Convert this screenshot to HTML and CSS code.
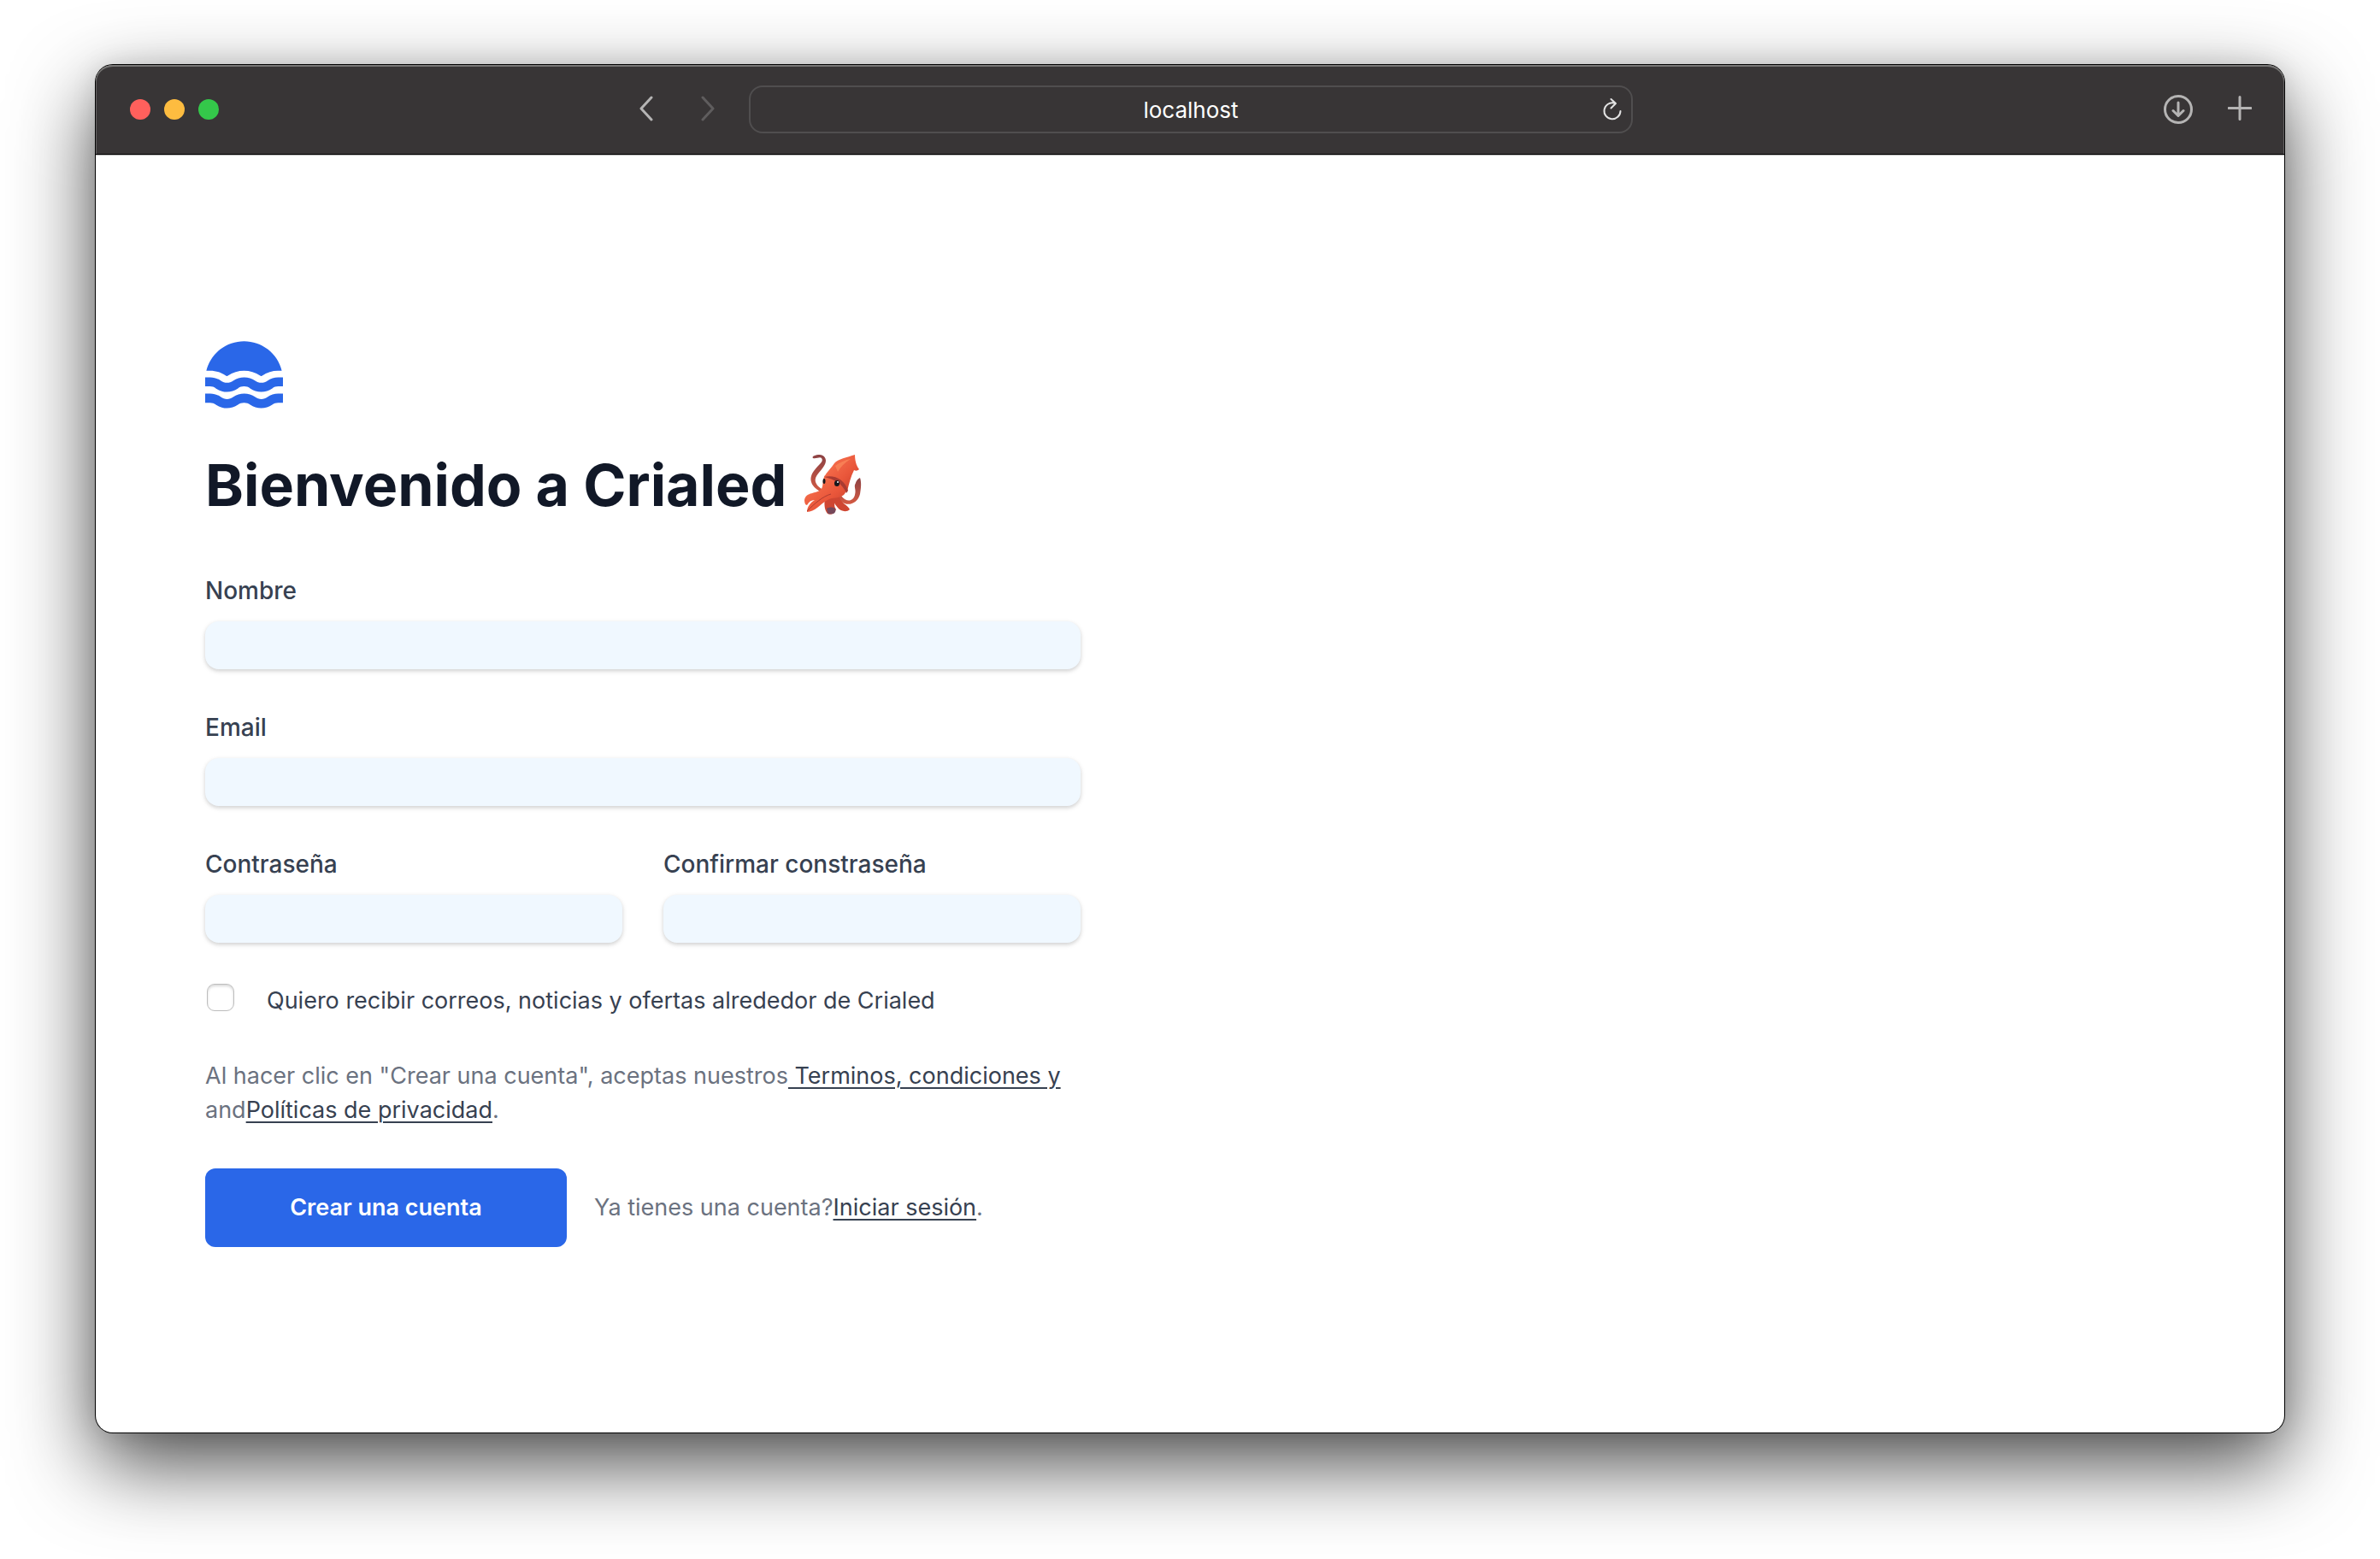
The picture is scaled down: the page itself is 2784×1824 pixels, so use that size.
FILE: index.html
```
<!DOCTYPE html>
<html lang="es">
<head>
<meta charset="utf-8">
<meta name="viewport" content="width=device-width, initial-scale=1">
<title>Crialed</title>
<link rel="stylesheet" href="styles.css">
</head>
<body>
<div class="window">
  <header class="toolbar">
    <div class="toolbar-left">
      <div class="lights">
        <span class="light light-red"></span>
        <span class="light light-yellow"></span>
        <span class="light light-green"></span>
      </div>
      <nav class="history">
        <button type="button" class="icon-button" aria-label="Atrás">
          <svg width="20" height="32" viewBox="0 0 20 32"><path d="M16 2 4 15l12 13" stroke="#b5b4b4"/></svg>
        </button>
        <button type="button" class="icon-button" aria-label="Adelante">
          <svg width="20" height="32" viewBox="0 0 20 32"><path d="M4 2l12 13L4 28" stroke="#5f5d5e"/></svg>
        </button>
      </nav>
    </div>
    <div class="address">
      <input class="address-input" type="text" value="localhost" aria-label="Dirección">
      <button type="button" class="icon-button" aria-label="Recargar">
        <svg width="24" height="28" viewBox="0 0 24 28"><path class="thin" d="M14 6.500A9.500 9.500 0 1 0 21.500 16M10.500 2l5.500 5-5.500 5.500" stroke="#e2e2e2"/></svg>
      </button>
    </div>
    <div class="toolbar-right">
      <button type="button" class="icon-button" aria-label="Descargas">
        <svg width="36" height="36" viewBox="0 0 36 36"><path d="M18 10v15M12 19.500l6 6 6-6" stroke="#b5b4b4"/><circle cx="18" cy="18" r="15.500" stroke="#b5b4b4"/></svg>
      </button>
      <button type="button" class="icon-button" aria-label="Nueva pestaña">
        <svg width="28" height="32" viewBox="0 0 28 32"><path d="M14 1.500v26M1 14.500h26" stroke="#b5b4b4"/></svg>
      </button>
    </div>
  </header>
  <main class="page">
    <section class="signup">
      <a class="logo" href="#" aria-label="Inicio">
        <svg width="93" height="80" viewBox="0 0 28 24" fill="#2a67e8">
          <path d="M.41 10.385C1.148 7.419 2.856 4.786 5.264 2.904 7.671 1.022 10.639 0 13.695 0s6.024 1.022 8.431 2.904c2.408 1.882 4.116 4.515 4.854 7.481h-1.200c-2.024-.030-4.007.575-5.670 1.730-.096.069-.196.133-.300.190h-.140c-.104-.057-.204-.121-.300-.190-1.678-1.128-3.653-1.731-5.675-1.731s-3.997.603-5.675 1.731c-.096.069-.196.133-.300.190h-.140c-.104-.057-.204-.121-.300-.190-1.663-1.155-3.646-1.760-5.670-1.730z"/>
          <path id="wave" d="M23.620 16.655c.616-.480 1.380-.731 2.160-.710h1.610v-3.210h-1.610c-1.375-.017-2.718.411-3.830 1.220-.626.461-1.383.710-2.160.710s-1.534-.249-2.160-.710c-1.140-.794-2.496-1.219-3.885-1.219s-2.745.425-3.885 1.219c-.626.461-1.383.710-2.160.710s-1.534-.249-2.160-.710c-1.126-.819-2.488-1.248-3.880-1.220H0v3.210h1.610c.781-.021 1.544.230 2.160.710 1.138.794 2.492 1.220 3.880 1.220s2.742-.426 3.880-1.220c.617-.479 1.380-.729 2.160-.710.781-.022 1.545.229 2.160.710 1.140.793 2.496 1.219 3.885 1.219s2.745-.426 3.885-1.219z"/>
          <use href="#wave" y="5.740"/>
        </svg>
      </a>
      <h1 class="title">Bienvenido a Crialed
        <svg class="squid" viewBox="0 0 90 90" role="img" aria-label="Calamar">
          <defs>
            <linearGradient id="skin" x1="0" y1="0" x2="1" y2="1"><stop offset="0" stop-color="#fb7a55"/><stop offset=".6" stop-color="#e9563a"/><stop offset="1" stop-color="#c23d2c"/></linearGradient>
            <linearGradient id="arm" x1="0" y1="0" x2="0" y2="1"><stop offset="0" stop-color="#8c4244"/><stop offset="1" stop-color="#d55a43"/></linearGradient>
          </defs>
          <path d="M38 56C22 50 16 40 24 29c6-8 12-11 9-15-2-2-6 1-10 0-2-2 3-4 8-4 7 1 9 7 5 13-4 7-12 12-10 19 2 6 8 9 15 11z" fill="url(#arm)"/>
          <path d="M56 58c6 8 14 7 16-1 2-7-2-9 1-14 1-4 5-6 5-6 2 6 1 13 0 19-2 9-11 14-18 11-5-2-8-6-9-9z" fill="url(#arm)"/>
          <path d="M54 58c0 8 10 11 12 16-4 4-11 2-14-2-4-4-6-9-6-14z" fill="#cf4632"/>
          <path d="M37 60c-1 7-1 14 3 19 4 2 8 0 10-5-4-5 0-10 0-17z" fill="#cf4632"/>
          <path d="M39 73c3-2 7-2 10 0 1 3 0 5-2 6-3 0-6 1-7-1z" fill="#76485a"/>
          <path d="M37 34c-4 7-1 13-5 17-5 5-17 2-19 12 0 3 1 6 3 6 2-4 5-6 9-6-5 3-9 8-9 14 9 0 15-9 24-14 7-4 13-1 19-6 5-5 3-12 5-18z" fill="url(#skin)"/>
          <path d="M36 36C39 30 45 25 48 20c4-5 15-7 24-10 0 9 3 15 5 17-2 2-4 2-6 1-4 8-6 16-8 25C57 42 48 37 36 36z" fill="url(#skin)"/>
          <path d="M36 36c12-3 24 3 28 16l-2 3C57 43 48 39 36 36z" fill="#a93b32"/>
          <path d="M49 23c5-4 12-7 18-8-8 5-12 10-15 15z" fill="#ff9a65" opacity=".5"/>
          <path d="M16 76c9-9 18-17 28-20" fill="none" stroke="#ad3c30"/>
          <ellipse cx="51" cy="43.500" rx="3" ry="3.500" fill="#15171d"/>
          <circle cx="52" cy="42" r="1" fill="#fff"/>
          <ellipse cx="36" cy="41" rx="1.500" ry="3" fill="#15171d"/>
        </svg>
      </h1>
      <form class="form">
        <div class="field field-wide">
          <label for="name">Nombre</label>
          <input id="name" type="text">
        </div>
        <div class="field field-wide">
          <label for="email">Email</label>
          <input id="email" type="email">
        </div>
        <div class="field">
          <label for="password">Contraseña</label>
          <input id="password" type="password">
        </div>
        <div class="field">
          <label for="confirm">Confirmar constraseña</label>
          <input id="confirm" type="password">
        </div>
        <label class="consent" for="marketing">
          <input id="marketing" type="checkbox">
          <span>Quiero recibir correos, noticias y ofertas alrededor de Crialed</span>
        </label>
        <p class="note field-wide">Al hacer clic en "Crear una cuenta", aceptas nuestros<a href="#"> Terminos, condiciones y</a><br>and<a href="#">Políticas de privacidad</a>.</p>
        <div class="actions">
          <button type="submit" class="submit">Crear una cuenta</button>
          <p class="note">Ya tienes una cuenta?<a href="#">Iniciar sesión</a>.</p>
        </div>
      </form>
    </section>
  </main>
</div>
</body>
</html>
```

FILE: styles.css
```
* {
  box-sizing: border-box;
}

body {
  display: flex;
  min-height: 100vh;
  margin: 0;
  padding: 76px 112px 148px;
  background: #fff;
  font-family: Inter, "Liberation Sans", sans-serif;
  font-size: 27px;
  line-height: 40px;
  color: #374151;
}

h1,
p {
  margin: 0;
}

button,
input {
  font: inherit;
}

.window {
  display: flex;
  flex: 1;
  flex-direction: column;
  border-radius: 20px;
  background: #fff;
  box-shadow: 0 0 0 1px #000, 0 36px 96px rgba(0, 0, 0, 0.72), 0 0 30px rgba(0, 0, 0, 0.1);
}

/* Browser toolbar */
.toolbar {
  display: grid;
  grid-template-columns: 1fr minmax(0, 1034px) 1fr;
  gap: 38px;
  align-items: center;
  height: 105px;
  padding: 0 38px 0 40px;
  border-bottom: 1px solid #000;
  border-radius: 20px 20px 0 0;
  background: #383536;
  box-shadow: inset 0 2px 0 #777675, inset 1px 0 0 #666465, inset -1px 0 0 #666465, 0 1px 0 #bbb;
}

.toolbar-left,
.toolbar-right,
.lights,
.history,
.address {
  display: flex;
  align-items: center;
}

.toolbar-left {
  justify-content: space-between;
}

.toolbar-right {
  justify-content: flex-end;
  gap: 40px;
}

.lights {
  gap: 16px;
}

.light {
  width: 24px;
  height: 24px;
  border-radius: 50%;
}

.light-red {
  background: #ff605c;
}

.light-yellow {
  background: #fdbc40;
}

.light-green {
  background: #34c84a;
}

.history {
  gap: 52px;
}

.icon-button {
  display: flex;
  padding: 0;
  border: 0;
  background: none;
}

.icon-button svg {
  fill: none;
  stroke-width: 3;
  stroke-linecap: round;
  stroke-linejoin: round;
}

.icon-button .thin {
  stroke-width: 2;
}

.address {
  height: 56px;
  padding: 0 10px 0 34px;
  border: 2px solid #504e4f;
  border-radius: 16px;
}

.address-input {
  flex: 1;
  min-width: 0;
  padding: 2px 0 0;
  border: 0;
  outline: 0;
  background: none;
  font-size: 26px;
  text-align: center;
  color: #fff;
}

/* Sign-up page */
.page {
  display: flex;
  flex: 1;
  align-items: center;
  padding: 64px 128px;
}

.signup {
  width: 100%;
  max-width: 1024px;
}

.logo {
  display: block;
  width: max-content;
}

.logo svg {
  display: block;
}

.title {
  display: flex;
  align-items: center;
  gap: 8px;
  margin-top: 48px;
  font-size: 68px;
  font-weight: 700;
  line-height: 80px;
  color: #111827;
}

.squid {
  width: 90px;
  height: 90px;
  margin: -5px 0;
}

.form {
  display: grid;
  grid-template-columns: 1fr 1fr;
  gap: 48px;
  margin-top: 64px;
}

.field {
  display: flex;
  flex-direction: column;
  gap: 16px;
  font-size: 28px;
  font-weight: 500;
}

.field-wide,
.consent,
.actions {
  grid-column: 1 / -1;
}

.field input {
  width: 100%;
  height: 56px;
  padding: 0 16px;
  border: 0;
  border-radius: 16px;
  background: #f0f8ff;
  box-shadow: 0 2px 6px rgba(0, 0, 0, 0.1), 0 2px 4px rgba(0, 0, 0, 0.1);
}

.consent {
  display: flex;
  gap: 36px;
}

.consent input {
  flex: none;
  appearance: none;
  width: 32px;
  height: 32px;
  margin: 0 2px;
  border: 1px solid #bdbdbd;
  border-radius: 9px;
  background: #fff;
  box-shadow: inset 0 2px 3px rgba(0, 0, 0, 0.15);
}

.note {
  color: #6b7280;
}

.note a {
  color: #374151;
  text-underline-offset: 4px;
  text-decoration-thickness: 2px;
}

.actions {
  display: flex;
  align-items: center;
  gap: 32px;
}

.submit {
  width: 423px;
  height: 92px;
  border: 0;
  border-radius: 12px;
  background: #2a67e8;
  font-weight: 600;
  color: #fff;
}
```
